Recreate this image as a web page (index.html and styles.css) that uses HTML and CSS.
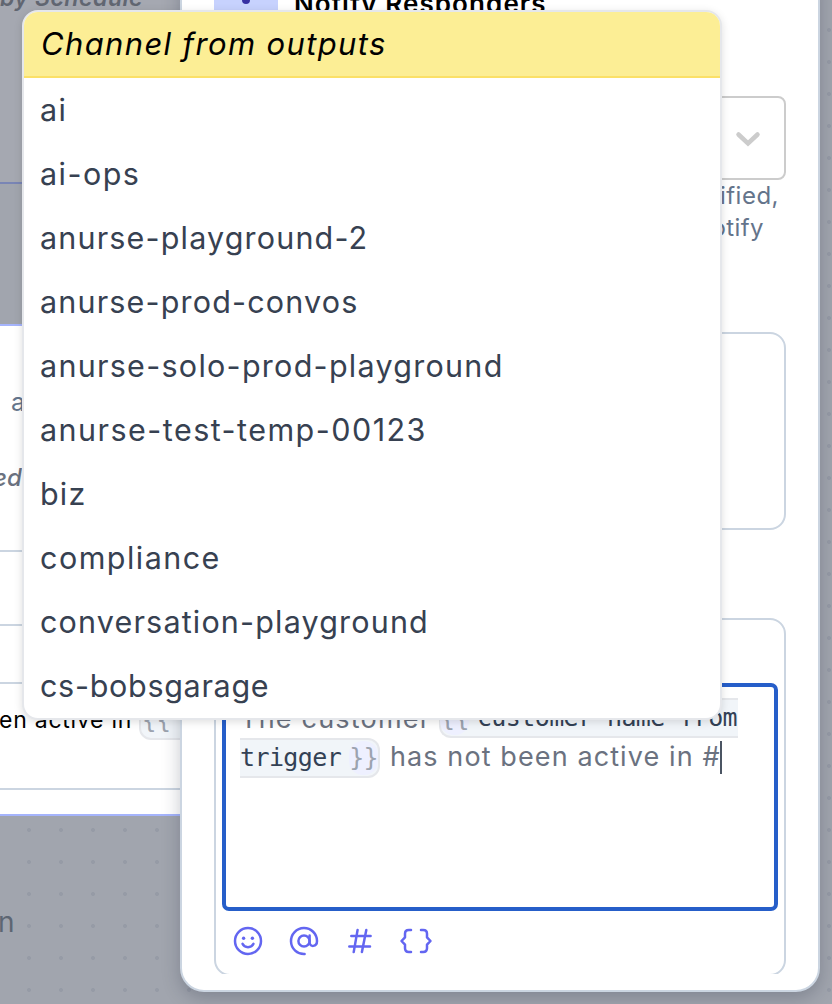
FILE: index.html
```
<!DOCTYPE html>
<html lang="en">
<head>
<meta charset="utf-8">
<title>Notify Responders</title>
<link rel="stylesheet" href="styles.css">
</head>
<body>
<main class="canvas">
  <section class="node node-schedule"><em class="schedule">by Schedule</em></section>
  <section class="node node-message">
    <div class="node-head"><span class="node-a">a</span><em class="node-ed">ed</em></div>
    <div class="node-gap"></div>
    <div class="node-row"></div>
    <div class="node-text"><span class="node-active">en active in</span><span class="node-token">{{</span></div>
  </section>
  <span class="node-n">n</span>

  <aside class="panel">
    <header class="panel-head">
      <span class="panel-icon"><i></i></span>
      <h1>Notify Responders</h1>
    </header>
    <div class="select">
      <svg width="28" height="20" viewBox="0 0 28 20"><path d="M4.5 4.500 14 13.500 23.500 4.500" fill="none" stroke="#ccc" stroke-width="4.5" stroke-linecap="round"/></svg>
    </div>
    <p class="help"><span class="help-1">ified,</span><span class="help-2">otify</span></p>
    <div class="summary"></div>
    <div class="composer-clip">
      <div class="composer">
        <div class="editor">
          <div class="line"><span class="t-customer">The customer</span><span class="token token-start"><b>{{</b><code>customer name from</code></span></div>
          <div class="line"><span class="token token-end"><code>trigger</code><b>}}</b></span><span class="t-active">has not been active in #</span><i class="caret"></i></div>
        </div>
        <div class="tools">
          <svg viewBox="0 0 32 32"><circle cx="16" cy="16" r="13"/><path d="M10.500 18.800c2 4.500 9 4.500 11 0"/><circle class="dot" cx="11.6" cy="13.3" r="1.7"/><circle class="dot" cx="20.4" cy="13.3" r="1.7"/></svg>
          <svg viewBox="0 0 32 32"><circle cx="16" cy="16" r="5.6"/><path d="M21.600 10.400v6.800c0 5.200 7.400 5 7.400-1.200a13 13 0 1 0-12.400 13"/></svg>
          <svg viewBox="0 0 32 32"><path d="M13.600 4.900 9.700 27.100M22.300 4.900l-4.400 22.200M7.300 11h19.300M5.300 21.400h20.700"/></svg>
          <svg class="wide" viewBox="0 0 36 32"><path d="M13 5h-2.200c-2.600 0-3.800 1.300-3.800 3.700v3.600L3.500 16 7 19.700v3.600C7 25.700 8.200 27 10.800 27H13M23 5h2.200c2.600 0 3.800 1.300 3.800 3.700v3.600L32.500 16 29 19.700v3.600c0 2.400-1.200 3.700-3.800 3.700H23"/></svg>
        </div>
      </div>
    </div>
  </aside>

  <div class="menu">
    <div class="menu-head"><span>Channel from outputs</span></div>
    <ul>
      <li class="wide-2">ai</li>
      <li class="wide-3">ai-ops</li>
      <li class="wide-1">anurse-playground-2</li>
      <li class="wide-1">anurse-prod-convos</li>
      <li class="wide-2">anurse-solo-prod-playground</li>
      <li class="wide-3">anurse-test-temp-00123</li>
      <li class="wide-1">biz</li>
      <li class="wide-3">compliance</li>
      <li class="wide-1">conversation-playground</li>
      <li>cs-bobsgarage</li>
    </ul>
  </div>
</main>
</body>
</html>
```
FILE: styles.css
```
* { box-sizing: border-box; }
body { margin: 0; font-family: Inter, "Liberation Sans", sans-serif; }
.canvas {
  position: relative;
  width: 832px;
  height: 1004px;
  overflow: hidden;
  background-color: #a1a5ae;
  background-image: radial-gradient(circle, #969ba6 1.7px, transparent 2.3px);
  background-size: 32px 32px;
  background-position: 13px 14px;
}
.node { position: absolute; left: 0; width: 200px; }
.node-schedule { top: 0; height: 184px; background: #a5a8b1; border-bottom: 2px solid #7985b5; }
.schedule { display: block; margin-top: -16px; line-height: 28px; font-size: 23px; font-weight: 600; letter-spacing: .55px; color: #616671; white-space: nowrap; }
.node-message { top: 324px; height: 492px; background: #fff; border: solid #a5b4fc; border-width: 2px 0; }
.node-head { height: 226px; border-bottom: 2px solid #cbd5e1; padding-top: 60px; }
.node-a, .node-ed { display: block; line-height: 32px; font-size: 25px; color: #64748b; }
.node-a { padding-left: 11px; }
.node-ed { margin-top: 44px; margin-left: -7px; font-size: 24px; font-weight: 500; color: #6b7280; }
.node-gap { height: 74px; border-bottom: 2px solid #cbd5e1; }
.node-row { height: 58px; border-bottom: 2px solid #cbd5e1; }
.node-text { height: 106px; border-bottom: 2px solid #cbd5e1; display: flex; align-items: flex-start; padding-top: 20px; }
.node-active { flex: none; width: 140px; margin-left: -1px; line-height: 32px; font-size: 23px; letter-spacing: .75px; white-space: nowrap; }
.node-token { flex: none; width: 80px; height: 36px; border: 2px solid #e5e7eb; border-radius: 12px; background: #f1f5f9; padding-left: 1px; font: 24px/29px "DejaVu Sans Mono", monospace; color: #9ca3af; }
.node-n { position: absolute; left: -2px; top: 905px; line-height: 34px; font-size: 28px; color: #5d6673; }

.panel {
  position: absolute;
  left: 180px;
  top: -40px;
  width: 640px;
  height: 1032px;
  padding: 0 32px;
  background: #fff;
  border: 2px solid #cbd5e1;
  border-radius: 24px;
  box-shadow: 0 6px 18px rgba(30, 41, 59, .25);
}
.panel-head { height: 134px; display: flex; gap: 16px; }
.panel-icon { width: 64px; height: 64px; background: #c7d2fe; display: flex; justify-content: center; padding-top: 33px; }
.panel-icon i { width: 8px; height: 9px; border-radius: 4px; background: #3730a3; }
h1 { margin: 25px 0 0; line-height: 34px; font-size: 26px; font-weight: 600; letter-spacing: 1.1px; white-space: nowrap; height: 34px; }
.select { height: 84px; border: 2px solid #ccc; border-radius: 8px; display: flex; align-items: center; justify-content: flex-end; padding: 4px 22px 0 0; }
.help { margin: 0; height: 152px; font-size: 24px; line-height: 32px; color: #64748b; text-align: right; }
.help span { display: block; }
.help-1 { padding-right: 7px; letter-spacing: .5px; }
.help-2 { padding-right: 22px; letter-spacing: .4px; }
.summary { height: 198px; border: 2px solid #cbd5e1; border-radius: 16px; }
.composer-clip { height: 356px; margin-top: 88px; overflow: hidden; }
.composer { height: 358px; border: 2px solid #cbd5e1; border-radius: 16px; padding: 63px 6px 0; }
.editor { height: 228px; border: 4px solid #265ec9; border-radius: 7px; padding: 11px 14px; color: #6b7280; }
.line { height: 40px; display: flex; align-items: center; white-space: nowrap; }
.t-customer { width: 199px; font-size: 27px; letter-spacing: 1.2px; }
.t-active { margin-left: 10px; padding-bottom: 4px; font-size: 27px; letter-spacing: 1.1px; }
.token { height: 40px; display: flex; align-items: center; border: 2px solid #e5e7eb; background: #f1f5f9; }
.token code, .token b { font-family: "DejaVu Sans Mono", monospace; font-size: 25px; letter-spacing: -.6px; line-height: 34px; }
.token code { color: #334155; }
.token b { font-weight: 400; color: #9ca3af; background: #eef0ff; border-radius: 14px; }
.token-start { width: 299px; border-right: 0; border-radius: 12px 0 0 12px; padding-left: 1px; }
.token-start b { margin-left: -2px; }
.token-start code { margin-left: 8px; }
.token-end { width: 140px; border-left: 0; border-radius: 0 12px 12px 0; }
.token-end b { margin-left: 8px; }
.caret { width: 2px; height: 33px; margin: -1px 0 0 -1px; background: #4b5563; }
.tools { display: flex; gap: 24px; padding: 14px 0 0 10px; }
.tools svg { width: 32px; height: 32px; fill: none; stroke: #6366f1; stroke-width: 2.5; stroke-linecap: round; stroke-linejoin: round; }
.tools .wide { width: 36px; margin-left: -2px; }
.tools .dot { fill: #6366f1; stroke: none; }

.menu {
  position: absolute;
  left: 22px;
  top: 10px;
  width: 700px;
  height: 710px;
  overflow: hidden;
  background: #fff;
  border: 2px solid #e5e7eb;
  border-radius: 16px;
  box-shadow: 0 2px 8px rgba(0, 0, 0, .13);
}
.menu-head { height: 66px; padding-left: 17px; background: #fcee95; border-bottom: 2px solid #fbe067; font-size: 31px; line-height: 63px; font-style: italic; letter-spacing: 1.35px; }
.menu ul { margin: 0; padding: 0 0 0 16px; list-style: none; }
.menu li { height: 64px; line-height: 63px; font-size: 30.5px; letter-spacing: .7px; color: #374151; }
.menu .wide-1 { letter-spacing: 1.17px; }
.menu .wide-2 { letter-spacing: 1.27px; }
.menu .wide-3 { letter-spacing: 1.46px; }
```
